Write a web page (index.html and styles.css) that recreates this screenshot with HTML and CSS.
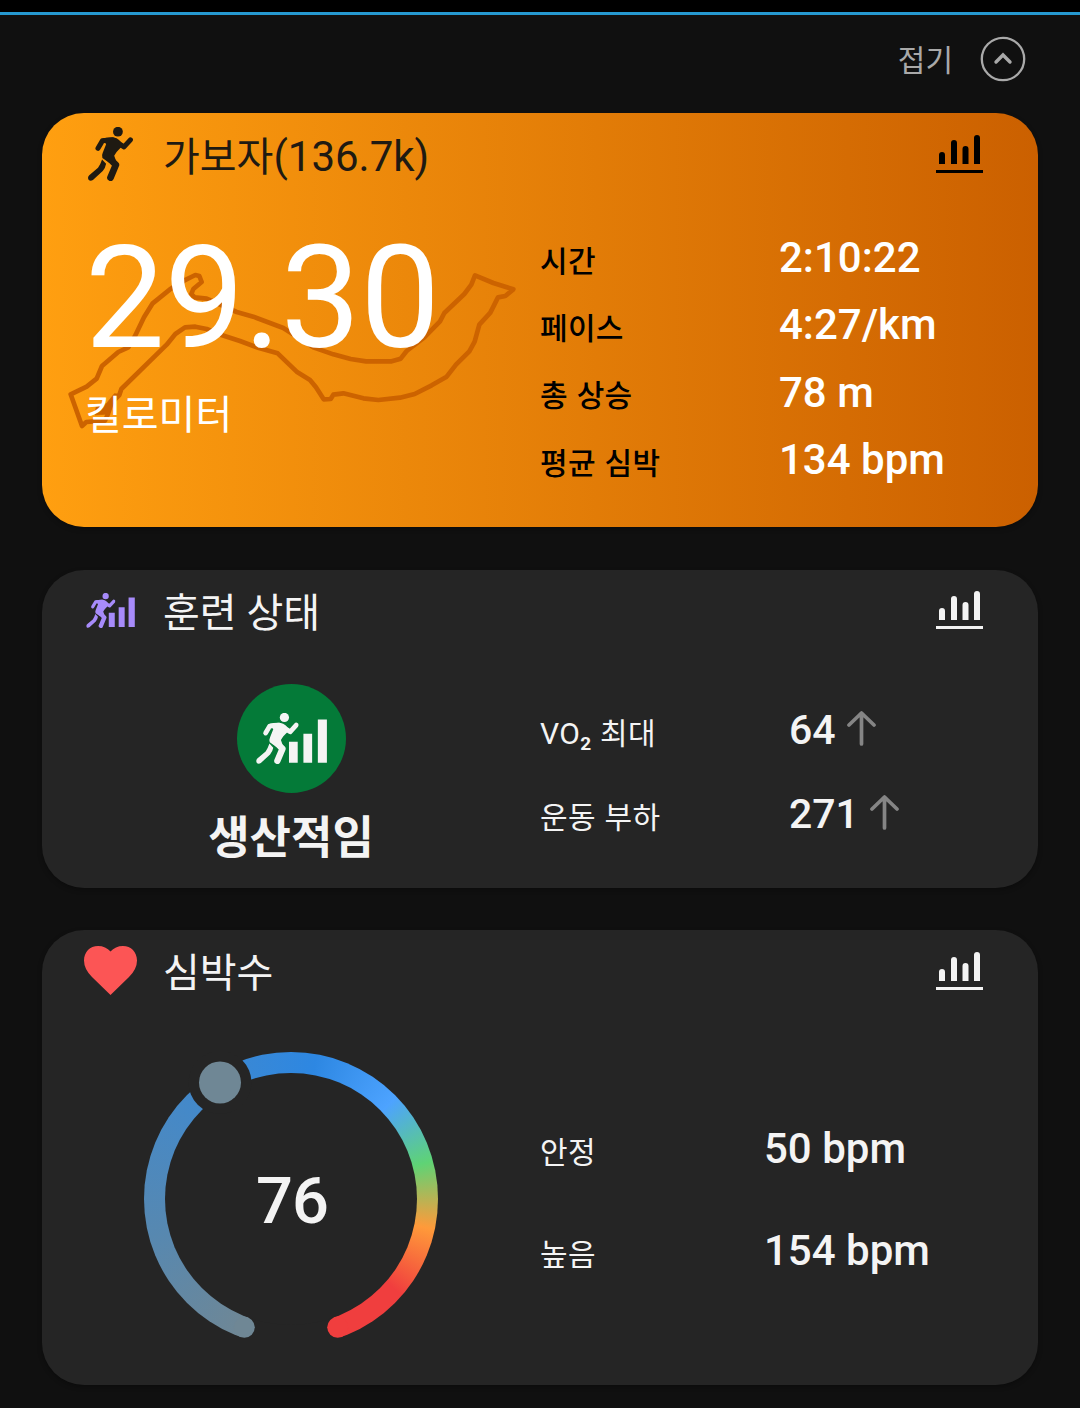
FILE: index.html
```html
<!DOCTYPE html>
<html lang="ko">
<head>
    <meta charset="UTF-8">
    <meta name="viewport" content="width=device-width, initial-scale=1.0">
    <title>가보자</title>
    <link rel="stylesheet" href="styles.css">
</head>
<body>
    <!-- Shared icons -->
    <svg class="icon-defs" width="0" height="0">
        <symbol id="runner" viewBox="0 0 132 160">
            <circle cx="88" cy="14" r="14.500" fill="currentColor"/>
            <g fill="none" stroke="currentColor" stroke-linecap="round" stroke-linejoin="round">
                <path d="M29 63L42 41L72 38" stroke-width="15"/>
                <path d="M86 46L106 59L125 38" stroke-width="15"/>
                <path d="M56 86L82 112L66 150" stroke-width="20"/>
            </g>
            <path d="M42 34Q56 30 76 31Q93 34 103 54L84 74L77 85L82 99L62 106L42 92Q39 84 43 76L53 51Z" fill="currentColor"/>
            <path d="M41 96L53 109Q51 121 43 130L14 157Q6 162 1 156Q-3 149 3 143L29 121Q36 111 41 96Z" fill="currentColor"/>
        </symbol>
        <symbol id="chart" viewBox="0 0 47 40">
            <path d="M3 30V21a3 3 0 0 1 6 0V30ZM15 30V9a3 3 0 0 1 6 0V30ZM26.500 30V15a3 3 0 0 1 6 0V30ZM38 30V4a3 3 0 0 1 6 0V30ZM0 36h47v3H0Z" fill="currentColor"/>
        </symbol>
        <symbol id="training" viewBox="0 0 211 152">
            <use href="#runner" x="0" y="0" width="127" height="152"/>
            <path d="M98 86h26v62H98ZM141 62h26v86H141ZM184 19h27v129H184Z" fill="currentColor"/>
        </symbol>
        <symbol id="arrow-up" viewBox="0 0 29 35">
            <path d="M14.500 33V2M2 14L14.500 2L27 14" fill="none" stroke="currentColor" stroke-width="3.700" stroke-linecap="round" stroke-linejoin="round"/>
        </symbol>
    </svg>

    <div class="top-bar"></div>
    <header class="collapse">
        <span>접기</span>
        <svg class="collapse-icon" viewBox="0 0 46 46">
            <circle cx="23" cy="23" r="21.200" fill="none" stroke="currentColor" stroke-width="2.300"/>
            <path d="M16 26L23 19L30 26" fill="none" stroke="currentColor" stroke-width="3.400" stroke-linecap="round"/>
        </svg>
    </header>

    <main class="cards">
        <section class="card card-run">
            <svg class="route" viewBox="0 0 1440 690">
                <path d="M402 182L436 165L448 168L455 186L430 207L424 222L434 232L470 236L520 258L560 276L610 290L700 324L790 382L850 403L902 417L948 424L1025 424L1052 416L1070 393L1123 352L1170 304L1183 279L1243 222L1264 194L1275 166L1330 189L1390 208L1366 228L1344 232L1321 278L1288 314L1274 365L1258 394L1218 434L1190 470L1145 496L1094 522L1050 533L985 540L940 535L880 520L850 524L842 537L821 538L798 502L780 480L740 455L683 400L627 384L570 363L512 344L470 327L436 320L405 322L376 342L350 374L214 507L208 525L185 548L173 584L165 602L109 606L96 618L62 523L110 500L140 476L156 438L205 396L235 382L254 350L282 292L308 250L360 208Z"/>
                <path d="M193 521L214 523L180 547L177 582L135 585L138 562L170 550Z" class="route-end"/>
            </svg>
            <div class="card-header">
                <div class="card-icon"><svg class="icon-runner"><use href="#runner"/></svg></div>
                <h2>가보자<span>(136.7k)</span></h2>
                <svg class="icon-chart"><use href="#chart"/></svg>
            </div>
            <div class="card-body">
                <div class="summary">
                    <div class="distance">29.30</div>
                    <div class="unit">킬로미터</div>
                </div>
                <dl class="stats">
                    <dt>시간</dt><dd>2:10:22</dd>
                    <dt>페이스</dt><dd>4:27/km</dd>
                    <dt>총 상승</dt><dd>78 m</dd>
                    <dt>평균 심박</dt><dd>134 bpm</dd>
                </dl>
            </div>
        </section>

        <section class="card card-training">
            <div class="card-header">
                <div class="card-icon"><svg class="icon-training"><use href="#training"/></svg></div>
                <h2>훈련 상태</h2>
                <svg class="icon-chart"><use href="#chart"/></svg>
            </div>
            <div class="card-body">
                <div class="summary">
                    <div class="badge"><svg><use href="#training"/></svg></div>
                    <div class="status">생산적임</div>
                </div>
                <dl class="stats">
                    <dt>VO<sub>2</sub> 최대</dt><dd>64<svg class="icon-arrow"><use href="#arrow-up"/></svg></dd>
                    <dt>운동 부하</dt><dd>271<svg class="icon-arrow"><use href="#arrow-up"/></svg></dd>
                </dl>
            </div>
        </section>

        <section class="card card-heart">
            <div class="card-header">
                <div class="card-icon">
                    <svg class="icon-heart" viewBox="0 0 53 49"><path d="M26.500 49L8 31Q0 23 0 14.500C0 6 6 0 14 0C19 0 23.500 2 26.500 5.500C29.500 2 34 0 39 0C47 0 53 6 53 14.500Q53 23 45 31Z" fill="currentColor"/></svg>
                </div>
                <h2>심박수</h2>
                <svg class="icon-chart"><use href="#chart"/></svg>
            </div>
            <div class="card-body">
                <div class="summary">
                    <div class="gauge">
                        <svg class="gauge-marks" viewBox="0 0 294 294">
                            <circle cx="147" cy="147" r="126" fill="#252525"/>
                            <circle cx="100.300" cy="275.300" r="10.500" fill="#6f8795"/>
                            <circle cx="193.700" cy="275.300" r="10.500" fill="#f03e3e"/>
                            <circle cx="76" cy="30.500" r="31.500" fill="#252525"/>
                            <circle cx="76" cy="30.500" r="21" fill="#6f8795"/>
                        </svg>
                        <span class="gauge-value">76</span>
                    </div>
                </div>
                <dl class="stats">
                    <dt>안정</dt><dd>50 bpm</dd>
                    <dt>높음</dt><dd>154 bpm</dd>
                </dl>
            </div>
        </section>
    </main>
</body>
</html>
```
FILE: styles.css
```css
/* Global Styles */
* {
    box-sizing: border-box;
}

body {
    margin: 0;
    min-height: 1408px;
    background-color: #101010;
    color: #f4f4f4;
    font-family: Roboto, "Noto Sans CJK KR", sans-serif;
}

h2, dl, dt, dd {
    margin: 0;
    font-weight: 400;
}

svg {
    display: block;
    flex-shrink: 0;
}

.icon-defs {
    position: absolute;
}

/* Top bar */
.top-bar {
    height: 15px;
    background-color: #000;
    border-bottom: 3px solid #2699d0;
}

.collapse {
    display: flex;
    align-items: center;
    justify-content: flex-end;
    gap: 27px;
    height: 98px;
    padding: 0 54px 11px 0;
    color: #a9a9a9;
    font-size: 30px;
}

.collapse span {
    padding-bottom: 2px;
}

.collapse-icon {
    width: 46px;
    height: 46px;
}

/* Cards */
.cards {
    display: flex;
    flex-direction: column;
    gap: 42.5px;
    padding: 0 42px;
}

.card {
    position: relative;
    border-radius: 42px;
    background-color: #252525;
    box-shadow: 0 2px 5px rgba(0, 0, 0, 0.3);
}

.card-header {
    display: flex;
    align-items: center;
    height: 86px;
    padding: 0 55px 5px 41px;
}

.card-header h2 {
    flex: 1;
    padding-top: 7px;
    font-size: 40px;
    line-height: 60px;
}

.card-icon {
    display: flex;
    justify-content: center;
    width: 55px;
    margin-right: 25px;
}

.icon-chart {
    width: 47px;
    height: 40px;
}

.card-body {
    display: grid;
    grid-template-columns: 498px 1fr;
}

.stats {
    display: grid;
    grid-template-columns: 239px 1fr;
    align-items: center;
    align-content: start;
}

.stats dt {
    font-size: 30px;
    letter-spacing: 0.3px;
    word-spacing: 1px;
}

.stats dd {
    display: flex;
    align-items: center;
    padding-bottom: 2px;
    font-size: 42px;
    font-weight: 500;
}

/* Run card */
.card-run {
    height: 414px;
    background: linear-gradient(90deg, #ff9f10, #cb6000);
}

.card-run .card-header {
    color: #1f1a12;
}

.card-run h2 span {
    font-size: 42px;
}

.icon-runner {
    width: 45px;
    height: 54px;
    overflow: visible;
}

.card-run .icon-chart,
.card-run dt {
    color: #000;
}

.card-run dt {
    font-weight: 500;
}

.card-run dd {
    color: #fff;
}

.card-run .card-body {
    position: relative;
}

.card-run .summary {
    padding: 29px 0 0 43px;
    color: #fff;
}

.distance {
    font-size: 142px;
    letter-spacing: -0.4px;
    line-height: 142px;
}

.unit {
    margin-top: 16px;
    font-size: 40px;
    line-height: 60px;
}

.card-run .stats {
    grid-auto-rows: 67.3px;
    padding-top: 26px;
}

/* GPS track behind the distance */
.route {
    position: absolute;
    top: 107px;
    left: 8px;
    width: 480px;
    height: 230px;
}

.route path {
    fill: none;
    stroke: #cc6300;
    stroke-width: 14;
    stroke-linejoin: round;
}

.route .route-end {
    fill: #cc6300;
    stroke-width: 2;
}

/* Training card */
.card-training {
    height: 318px;
}

.card-training .card-icon {
    color: #a78bfa;
}

.icon-training {
    width: 49px;
    height: 35px;
}

.card-training .summary {
    display: flex;
    flex-direction: column;
    align-items: center;
    padding-top: 28.5px;
}

.badge {
    display: flex;
    align-items: center;
    justify-content: center;
    width: 109px;
    height: 109px;
    border-radius: 50%;
    background-color: #047a38;
}

.badge svg {
    width: 71px;
    height: 51px;
}

.status {
    margin-top: 13px;
    font-size: 45px;
    font-weight: 700;
    line-height: 66px;
}

.card-training .stats {
    grid-template-columns: 249px 1fr;
    grid-auto-rows: 84px;
    padding-top: 33.5px;
}

.card-training dd {
    padding-bottom: 3px;
    font-size: 41px;
}

.card-training sub {
    font-size: 19px;
    font-weight: 700;
    line-height: 0;
    vertical-align: -6px;
}

.icon-arrow {
    width: 29px;
    height: 35px;
    margin: -3px 0 0 11px;
    color: #858585;
}

/* Heart rate card */
.card-heart {
    height: 455px;
}

.card-heart .card-icon {
    color: #fc5555;
}

.icon-heart {
    width: 53px;
    height: 49px;
}

.card-heart .summary {
    padding: 36px 0 0 102px;
}

.gauge {
    position: relative;
    display: flex;
    align-items: center;
    justify-content: center;
    width: 294px;
    height: 294px;
    border-radius: 50%;
    background: conic-gradient(from 180deg, #252525 20deg, #6f8795 20deg, #5788b0 75deg, #4589c8 130deg, #2d87e2 190deg, #4da3ff 226deg, #5fd375 255deg, #ff9a3a 282deg, #f03e3e 311deg, #f03e3e 340deg, #252525 340deg);
}

.gauge-marks {
    position: absolute;
    inset: 0;
    width: 294px;
    height: 294px;
}

.gauge-value {
    position: relative;
    padding: 3px 0 0 2px;
    font-size: 65px;
    font-weight: 500;
    letter-spacing: -1px;
}

.card-heart .stats {
    grid-template-columns: 224px 1fr;
    grid-auto-rows: 102px;
    padding-top: 82.5px;
}
```
